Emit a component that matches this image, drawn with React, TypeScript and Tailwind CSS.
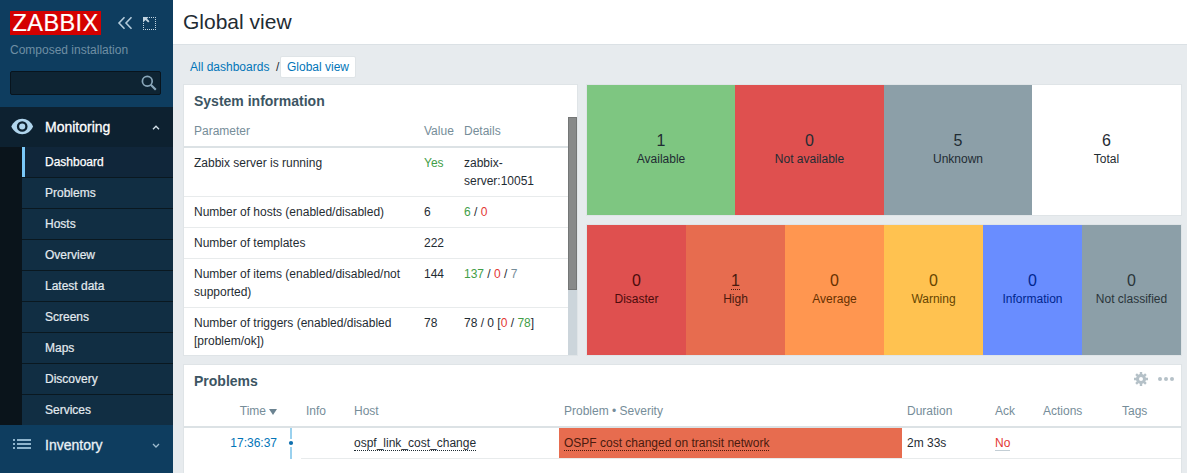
import type { ReactNode } from "react";

const menu = ["Dashboard", "Problems", "Hosts", "Overview", "Latest data", "Screens", "Maps", "Discovery", "Services"];

function Sidebar() {
  return (
    <aside className="flex h-full w-[173px] shrink-0 flex-col bg-[#0e3d5f]">
      <div className="flex h-[107px] shrink-0 flex-col px-[10px] pt-[11px]">
        <div className="flex h-6 items-center">
          <svg width="92" height="24" viewBox="0 0 92 24" className="shrink-0">
            <rect width="91" height="24" fill="#d40000" />
            <text x="2.6" y="20.300" fill="#fff" stroke="#fff" strokeWidth=".2" fontFamily="Liberation Sans, Arial, sans-serif" fontSize="23.500" textLength="85.5" lengthAdjust="spacing">ZABBIX</text>
          </svg>
          <svg width="16" height="14" viewBox="0 0 16 14" className="ml-[15px]" fill="none" stroke="#b4cbda" strokeWidth="1.6">
            <path d="M7.500 1.200 2 7l5.500 5.800M14.500 1.200 9 7l5.500 5.800" />
          </svg>
          <svg width="13" height="13" viewBox="0 0 13 13" className="ml-[10px]" fill="none" stroke="#c3d5e1">
            <path d="M6 .5h7M12.500 2v11M11 12.500H0M.5 11V6" strokeDasharray="1 1" />
            <path d="M0 0h5.500L4 1.700l2.500 2.500-1.300 1.300L2.500 3 0 5.500z" fill="#c3d5e1" stroke="none" />
          </svg>
        </div>
        <div className="mt-[6px] h-[18px] text-[12px] leading-[18px] text-[#6f8fa4]">Composed installation</div>
        <div className="mt-[12px] flex h-6 w-[151px] items-center justify-end rounded-[2px] border border-[#08141d] bg-[#0e2433] pr-[3px]">
          <svg width="16" height="16" viewBox="0 0 16 16" fill="none" stroke="#89a7ba">
            <circle cx="6.300" cy="6.300" r="4.900" strokeWidth="1.700" />
            <path d="m9.800 9.800 5 5" strokeWidth="2.200" />
          </svg>
        </div>
      </div>
      <div className="flex h-10 shrink-0 items-center bg-[#0d2130] pl-[11px] pr-[13px] text-white">
        <svg width="23" height="17" viewBox="0 0 23 17" className="-mt-[2px]">
          <path d="M.3 8.500C2.500 3.700 6.500.8 11.200.8s8.700 2.900 10.900 7.700c-2.200 4.800-6.200 7.700-10.900 7.700S2.500 13.300.3 8.500z" fill="#b0d5ed" />
          <circle cx="11.200" cy="8.500" r="4.200" fill="#b0d5ed" stroke="#0d2130" strokeWidth="2.300" />
        </svg>
        <span className="ml-[11px] flex-1 text-[14px] [-webkit-text-stroke:.3px]">Monitoring</span>
        <svg width="8" height="5" viewBox="0 0 8 5" fill="none" stroke="#d5e3ec" strokeWidth="1.300"><path d="m1 4.200 3-3 3 3" /></svg>
      </div>
      <nav className="flex shrink-0 flex-col bg-[#0a141b] pl-[22px]">
        {menu.map((m, i) => (
          <div
            key={m}
            className={
              i === 0
                ? "flex h-[31px] border-b border-[#0a1820] bg-[#10263a] text-[12px] text-white [-webkit-text-stroke:.25px]"
                : i === menu.length - 1
                  ? "flex h-[30px] items-center bg-[#112e43] pl-[23px] text-[12px] text-[#e4ebf0] [-webkit-text-stroke:.2px]"
                  : "flex h-[31px] items-center border-b border-[#0a1820] bg-[#112e43] pl-[23px] text-[12px] text-[#e4ebf0] [-webkit-text-stroke:.2px]"
            }
          >
            {i === 0 ? <span className="flex items-center border-l-[3px] border-[#7ac8f8] pl-5">{m}</span> : m}
          </div>
        ))}
      </nav>
      <div className="flex h-10 shrink-0 items-center px-[13px] text-[#e9f1f6]">
        <svg width="18" height="11" viewBox="0 0 18 11" fill="#8fb5cd" className="-mt-px">
          <path d="M0 0h2v2H0zM4 0h14v2H4zM0 4h2v2H0zM4 4h14v2H4zM0 8h2v2H0zM4 8h14v2H4z" />
        </svg>
        <span className="ml-[14px] flex-1 text-[14px] [-webkit-text-stroke:.3px]">Inventory</span>
        <svg width="8" height="5" viewBox="0 0 8 5" fill="none" stroke="#9dbbce" strokeWidth="1.300"><path d="m1 1 3 3 3-3" /></svg>
      </div>
    </aside>
  );
}

const G = ({ children }: { children: ReactNode }) => <span className="text-[#429e47]">{children}</span>;
const R = ({ children }: { children: ReactNode }) => <span className="text-[#e33734]">{children}</span>;

const info: [string, ReactNode, ReactNode][] = [
  ["Zabbix server is running", <G>Yes</G>, "zabbix-server:10051"],
  ["Number of hosts (enabled/disabled)", "6", <><G>6</G> / <R>0</R></>],
  ["Number of templates", "222", ""],
  ["Number of items (enabled/disabled/not supported)", "144", <><G>137</G> / <R>0</R> / <span className="text-[#768d99]">7</span></>],
  ["Number of triggers (enabled/disabled [problem/ok])", "78", <>78 / 0 [<R>0</R> / <G>78</G>]</>],
];

function SystemInformation() {
  return (
    <section className="flex h-[272px] w-[395px] flex-col border border-[#dfe4e7] bg-white">
      <h2 className="h-8 pl-[10px] text-[14px] font-bold leading-[32px] text-[#3c5563]">System information</h2>
      <div className="flex min-h-0 flex-1 overflow-hidden">
        <div className="w-[384px]">
          <div className="grid h-[31px] grid-cols-[230px_40px_1fr] border-b-2 border-[#dce2e5] pl-[10px] pt-[5px] leading-[18px] text-[#768d99]">
            <span>Parameter</span><span>Value</span><span>Details</span>
          </div>
          {info.map(([a, b, c]) => (
            <div key={a} className="grid grid-cols-[230px_40px_1fr] border-b border-[#e8ebec] py-[6px] pl-[10px] leading-[18px]">
              <span className="pr-[10px]">{a}</span>
              <span>{b}</span>
              <span className="pr-[24px]">{c}</span>
            </div>
          ))}
        </div>
        <div className="w-[9px] shrink-0 bg-[#ccd5db]">
          <div className="h-[173px] border border-[#747676] bg-[#888a8a]" />
        </div>
      </div>
    </section>
  );
}

function Tile({ n, label, className, linked }: { n: number; label: string; className: string; linked?: boolean }) {
  return (
    <div className={`flex flex-col items-center pt-[46px] ${className}`}>
      <span className={linked ? "h-[19px] border-b border-dotted border-[#4a1a0e] text-[16px] leading-[20px]" : "h-[19px] text-[16px] leading-[20px]"}>{n}</span>
      <span className="h-[18px] leading-[18px]">{label}</span>
    </div>
  );
}

function Problems() {
  const grid = "grid grid-cols-[118px_53px_204px_343px_88px_48px_79px_1fr]";
  return (
    <section className="h-[120px] w-[999px] border border-[#dfe4e7] bg-white">
      <div className="flex h-[31px] items-center justify-between pl-[10px] pr-[5px]">
        <h2 className="pt-[2px] text-[14px] font-bold text-[#3c5563]">Problems</h2>
        <div className="flex items-center gap-[10px] pb-[3px]">
          <svg width="14" height="14" viewBox="-7 -7 14 14">
            <circle r="3.500" fill="none" stroke="#b5c1c8" strokeWidth="3" />
            <path d="M0-7v3M0 7v-3M-7 0h3M7 0h-3M-4.900-4.900l2.200 2.200M4.900 4.900 2.700 2.700M4.900-4.900 2.700-2.700M-4.900 4.900l2.200-2.200" stroke="#b5c1c8" strokeWidth="2.400" />
          </svg>
          <svg width="18" height="4" viewBox="0 0 18 4" fill="#b5c1c8"><circle cx="2" cy="2" r="2" /><circle cx="8" cy="2" r="2" /><circle cx="14" cy="2" r="2" /></svg>
        </div>
      </div>
      <div className={`${grid} h-8 border-b-2 border-[#dce2e5] pt-[6px] leading-[18px] text-[#768d99]`}>
        <div className="flex h-[18px] items-center justify-end pr-[25px]">
          Time
          <svg width="8" height="6" viewBox="0 0 8 6" className="ml-[3px] mt-[2px]" fill="#6b8391"><path d="M0 0h8L4 6z" /></svg>
        </div>
        <span className="pl-[4px]">Info</span>
        <span className="-ml-px">Host</span>
        <span className="pl-[5px]">Problem • Severity</span>
        <span className="pl-[5px]">Duration</span>
        <span className="pl-[5px]">Ack</span>
        <span className="pl-[5px]">Actions</span>
        <span className="pl-[5px]">Tags</span>
      </div>
      <div className="flex h-[31px] leading-[18px]">
        <div className="flex w-[117px]">
          <span className="w-[93px] pt-[6px] text-right text-[#0275b8]">17:36:37</span>
          <svg width="6" height="31" viewBox="0 0 6 31" className="ml-[11px]">
            <path d="M3 0v11M3 19v12" stroke="#9ad1ee" strokeWidth="2" />
            <circle cx="3" cy="15" r="2.100" fill="#0f6fae" />
          </svg>
        </div>
        <div className="flex flex-1 border-b border-[#e8ebec]">
          <div className="w-[53px]" />
          <div className="w-[205px] pt-[6px]"><span className="inline-block h-[17px] border-b border-dotted border-[#1f2c33]">ospf_link_cost_change</span></div>
          <div className="w-[343px] bg-[#e76c4f] pl-[5px] pt-[6px] text-[#4a1a0e]"><span className="inline-block h-[17px] border-b border-dotted border-[#4a1a0e]">OSPF cost changed on transit network</span></div>
          <div className="w-[88px] pl-[5px] pt-[6px]">2m 33s</div>
          <div className="pl-[5px] pt-[6px]"><span className="inline-block h-[17px] border-b border-[#c3ced5] text-[#e33734]">No</span></div>
        </div>
      </div>
    </section>
  );
}

export default function App() {
  return (
    <div className="flex h-[473px] w-[1187px] overflow-hidden bg-[#e7ebee] font-['Liberation_Sans',Arial,sans-serif] text-[12px] text-[#1f2c33]">
      <Sidebar />
      <main className="flex min-w-0 flex-1 flex-col">
        <header className="flex h-[45px] shrink-0 items-center border-b border-[#dbe1e5] bg-white pl-[10px]">
          <h1 className="text-[21px] leading-[24px]">Global view</h1>
        </header>
        <div className="flex h-[39px] shrink-0 items-start pl-[17px] pt-[11px] leading-[22px]">
          <span className="w-[86px] text-[#0275b8]">All dashboards</span>
          <span className="w-[4px]">/</span>
          <span className="h-[22px] rounded-[2px] border border-[#dfe4e7] bg-white px-[6px] leading-[20px] text-[#0275b8]">Global view</span>
        </div>
        <div className="flex flex-col gap-2 pl-[10px]">
          <div className="flex gap-2">
            <SystemInformation />
            <div className="flex w-[596px] flex-col gap-2">
              <div className="grid h-[132px] grid-cols-[148px_149px_148px_149px] border border-[#dfe4e7]">
                <Tile n={1} label="Available" className="bg-[#7ec681]" />
                <Tile n={0} label="Not available" className="bg-[#df504f]" />
                <Tile n={5} label="Unknown" className="bg-[#8c9fa8]" />
                <Tile n={6} label="Total" className="bg-white" />
              </div>
              <div className="grid h-[132px] grid-cols-6 border border-[#dfe4e7]">
                <Tile n={0} label="Disaster" className="bg-[#df504f] text-[#4b0c0c]" />
                <Tile n={1} label="High" className="bg-[#e76c4f] text-[#4a1a0e]" linked />
                <Tile n={0} label="Average" className="bg-[#ff9650] text-[#663000]" />
                <Tile n={0} label="Warning" className="bg-[#ffc250] text-[#664400]" />
                <Tile n={0} label="Information" className="bg-[#698dff] text-[#00268e]" />
                <Tile n={0} label="Not classified" className="bg-[#8c9fa8] text-[#2a353a]" />
              </div>
            </div>
          </div>
          <Problems />
        </div>
      </main>
    </div>
  );
}
